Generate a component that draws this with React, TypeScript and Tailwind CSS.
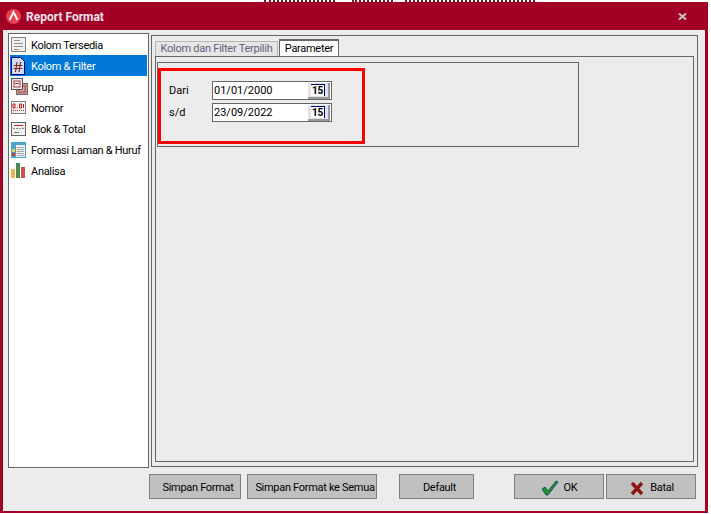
import React from 'react';

const font = { fontFamily: 'Roboto, "Liberation Sans", Arial, sans-serif' };

function IconColumns() {
  return (
    <svg width="16" height="16" viewBox="0 0 16 16">
      <rect x="0.5" y="0.5" width="14" height="14" fill="#f1f1f1" stroke="#808080" />
      <path d="M3 3.5h6M3 6.5h9M3 9.5h9M3 12.5h5" stroke="#909090" />
    </svg>
  );
}

function IconFilter() {
  return (
    <svg width="14" height="18" viewBox="0 0 14 18">
      <path d="M.5 .5h9l4 4v13H.5z" fill="#cfdcf2" stroke="#00008b" />
      <path d="M6 5L4.5 15M9.5 5L8 15" stroke="#5a1a1a" fill="none" />
      <path d="M2.5 8.5h9M2.5 11.5h9" stroke="#8e2020" fill="none" />
    </svg>
  );
}

function IconGroup() {
  return (
    <svg width="17" height="17" viewBox="0 0 17 17">
      <rect x="5.5" y="5.5" width="11" height="11" fill="#c98f8f" stroke="#6e6e6e" />
      <rect x="8" y="8" width="6" height="6" fill="#d9b3b3" stroke="#a04a4a" />
      <rect x="0.5" y="0.5" width="11" height="11" fill="#e8e8e8" stroke="#555" />
      <rect x="3" y="3" width="6" height="6" fill="#eeeeee" stroke="#b03a3a" />
      <path d="M4 5.5h4" stroke="#b03a3a" />
    </svg>
  );
}

function IconNumber() {
  return (
    <svg width="15" height="13" viewBox="0 0 15 13">
      <rect x="0.5" y="0.5" width="14" height="12" fill="#f4f4f4" stroke="#808080" />
      <path d="M2 3h2v4H2zM6 7h.8M8.5 3h2v4h-2zM12.5 3v4" stroke="#c01818" fill="none" />
      <path d="M2 9.5h11" stroke="#c01818" strokeDasharray="1 1" />
    </svg>
  );
}

function IconBlock() {
  return (
    <svg width="15" height="14" viewBox="0 0 15 14">
      <rect x="0.5" y="0.5" width="14" height="13" fill="#f2f2f2" stroke="#666" />
      <path d="M3 3.5h9" stroke="#c02020" />
      <path d="M2 6.5h11" stroke="#888" strokeDasharray="2 1" />
      <path d="M3 10.5h5" stroke="#777" />
    </svg>
  );
}

function IconLayout() {
  return (
    <svg width="15" height="16" viewBox="0 0 15 16">
      <rect width="15" height="16" fill="#4aa3c8" />
      <rect x="5" y="3" width="9" height="12" fill="#f0f0f0" />
      <path d="M6 5.5h7M6 7.5h7M6 9.5h7M6 11.5h7M6 13.5h7" stroke="#a8a8a8" />
      <rect x="1" y="7" width="3" height="3" fill="#f2d23c" />
      <rect x="1" y="11" width="3" height="3" fill="#d8332c" />
    </svg>
  );
}

function IconChart() {
  return (
    <svg width="15" height="15" viewBox="0 0 15 15">
      <rect x="0" y="6" width="4" height="9" fill="#eeb94a" />
      <rect x="5" y="0" width="4" height="15" fill="#4f8a55" />
      <rect x="10" y="4" width="4" height="11" fill="#cc4f4a" />
    </svg>
  );
}

const menu = [
  { label: 'Kolom Tersedia', icon: <IconColumns /> },
  { label: 'Kolom & Filter', icon: <IconFilter />, active: true },
  { label: 'Grup', icon: <IconGroup /> },
  { label: 'Nomor', icon: <IconNumber /> },
  { label: 'Blok & Total', icon: <IconBlock /> },
  { label: 'Formasi Laman & Huruf', icon: <IconLayout /> },
  { label: 'Analisa', icon: <IconChart /> },
];

function DateField({ label, value }: { label: string; value: string }) {
  return (
    <div className="flex items-center h-[19px]">
      <span className="w-[43px] pt-[2px] text-[11px] text-black">{label}</span>
      <div className="w-[120px] h-[19px] bg-white border border-[#666] flex items-center justify-between pl-px pr-px">
        <span className="pt-[2px] text-[11px] text-black">{value}</span>
        <div className="w-[22px] h-[16px] bg-[#e4e4e4] border-r-2 border-b-2 border-[#9a9a9a] flex items-center justify-center">
          <div className="w-[14px] h-[12px] bg-white border-t border-r border-[#00008b] text-center">
            <span className="block text-[10px] leading-[11px] tracking-[-0.3px] font-bold text-black">15</span>
          </div>
        </div>
      </div>
    </div>
  );
}

function FooterButton({ className, children }: { className: string; children: React.ReactNode }) {
  return (
    <button className={`h-[25px] pt-[3px] bg-[#c0c0c0] border border-[#808080] text-[11px] tracking-[-0.3px] text-black flex items-center justify-center whitespace-nowrap overflow-hidden ${className}`}>
      {children}
    </button>
  );
}

export default function App() {
  return (
    <div className="w-[711px] h-[514px] bg-white" style={font}>
      {/* clipped text of the page behind the dialog */}
      <div className="h-[2px] flex pl-[264px]">
        <div className="w-[71px] border-t-2 border-dotted border-[#7a1a20]" />
        <div className="w-[41px] ml-[17px] border-t-2 border-dotted border-[#7a1a20]" />
        <div className="w-[130px] ml-[12px] border-t-2 border-dotted border-[#7a1a20]" />
      </div>
      <div className="w-[708px] h-[511px] bg-[#a30026] flex flex-col">
        {/* Title bar */}
        <div className="h-[28px] shrink-0 flex items-center pl-[6px] pr-[21px]">
          <svg width="15" height="15" viewBox="0 0 15 15">
            <circle cx="7.5" cy="7.5" r="7.5" fill="#e8404f" />
            <path d="M3.5 11L7.5 3l4 8" stroke="#fff" strokeWidth="1.8" fill="none" />
          </svg>
          <span className="ml-[5px] pt-px text-[12px] font-bold text-[#f3e4ea]">Report Format</span>
          <svg className="ml-auto" width="9" height="7" viewBox="0 0 9 7">
            <path d="M1 .5l7 6M8 .5l-7 6" stroke="#c4c4c4" strokeWidth="2" />
          </svg>
        </div>

        {/* Body */}
        <div className="h-[481px] mx-[3px] bg-[#ececec] pl-[5px] pr-[7px] pt-[3px]">
          <div className="flex items-start gap-[2px]">
            {/* Left menu */}
            <div className="w-[141px] h-[435px] bg-white border border-[#666] px-px">
              {menu.map(item => (
                <div
                  key={item.label}
                  className={`h-[21px] flex items-center ${item.active ? 'bg-[#0078d7] text-white' : 'text-black'}`}
                >
                  <div className="w-[21px] pl-px shrink-0 flex items-center justify-start">{item.icon}</div>
                  <span className="pt-[3px] text-[11px] tracking-[-0.3px] whitespace-nowrap">{item.label}</span>
                </div>
              ))}
            </div>

            {/* Tab panel */}
            <div className="w-[547px] h-[432px] mt-[2px] border border-[#666] pt-[3px] px-[3px]">
              <div className="flex items-end h-[17px]">
                <div className="w-[123px] h-[15px] bg-[#e6e6e6] border-t border-l border-r border-[#b5b5b5] text-[11px] tracking-[-0.25px] leading-[14px] text-[#5f5f75] text-center">
                  Kolom dan Filter Terpilih
                </div>
                <div className="ml-px w-[60px] h-[17px] bg-white border-t-2 border-l border-r border-[#666] text-[11px] tracking-[-0.3px] leading-[15px] text-black text-center">
                  Parameter
                </div>
              </div>
              <div className="w-[539px] h-[406px] border border-[#666] pl-px pt-[5px]">
                <div className="relative w-[422px] h-[85px] border border-[#666] pl-[11px] pt-[18px]">
                  <div className="flex flex-col gap-[3px]">
                    <DateField label="Dari" value="01/01/2000" />
                    <DateField label="s/d" value="23/09/2022" />
                  </div>
                  {/* red annotation */}
                  <div className="absolute left-0 top-[5px] w-[207px] h-[76px] border-[3px] border-[#ff0000]" />
                </div>
              </div>
            </div>
          </div>

          {/* Footer buttons */}
          <div className="flex mt-[6px] ml-[141px]">
            <FooterButton className="w-[92px] pl-[6px]">Simpan Format</FooterButton>
            <FooterButton className="w-[130px] ml-[6px] pl-[6px]">Simpan Format ke Semua</FooterButton>
            <FooterButton className="w-[75px] ml-[22px] pl-[6px]">Default</FooterButton>
            <FooterButton className="w-[90px] ml-[40px] gap-[5px]">
              <svg width="18" height="16" viewBox="0 0 18 16">
                <path d="M1 9l3-2 3 4 8-10 2 1-10 13-2 0z" fill="#1c9a1c" stroke="#123a7a" strokeWidth="0.8" />
              </svg>
              OK
            </FooterButton>
            <FooterButton className="w-[90px] ml-[2px] gap-[6px] pl-[2px]">
              <svg width="14" height="15" viewBox="0 0 14 15">
                <path d="M2 2l10 11M12 2L2 13" stroke="#8e1414" strokeWidth="3.4" />
              </svg>
              Batal
            </FooterButton>
          </div>
        </div>
      </div>
    </div>
  );
}
